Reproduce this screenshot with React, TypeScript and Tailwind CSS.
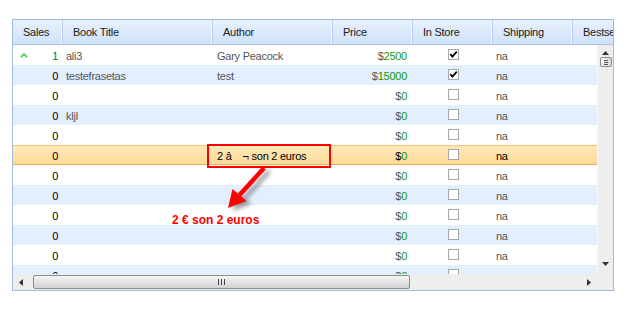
import React from "react";

type Row = {
  sales: number;
  title: string;
  author: React.ReactNode;
  price: number;
  store: boolean;
  ship: string;
  up?: boolean;
  selected?: boolean;
};

const blank = (): Row => ({ sales: 0, title: "", author: "", price: 0, store: false, ship: "na" });

const rows: Row[] = [
  { sales: 1, title: "ali3", author: "Gary Peacock", price: 2500, store: true, ship: "na", up: true },
  { sales: 0, title: "testefrasetas", author: "test", price: 15000, store: true, ship: "na" },
  blank(),
  { ...blank(), title: "kljl" },
  blank(),
  {
    ...blank(),
    selected: true,
    author: (
      <>
        2 â<span className="inline-block w-[11px]" />¬ son 2 euros
      </>
    ),
  },
  blank(),
  blank(),
  blank(),
  blank(),
  blank(),
  blank(),
];

const columns = [
  { label: "Sales", w: "w-[50px]" },
  { label: "Book Title", w: "w-[150px]" },
  { label: "Author", w: "w-[120px]" },
  { label: "Price", w: "w-[80px]" },
  { label: "In Store", w: "w-[80px]" },
  { label: "Shipping", w: "w-[80px]" },
  { label: "Bestseller", w: "w-[80px]" },
];

function Checkbox({ checked }: { checked: boolean }) {
  return (
    <div className="w-[11px] h-[11px] border border-[#a6a6a6] bg-white flex items-center justify-center -mt-[3px]">
      {checked && (
        <svg width="9" height="9" viewBox="0 0 9 9">
          <path d="M1.3 4.2 L3.4 6.6 L7.8 1.6" fill="none" stroke="#000" strokeWidth="1.8" />
        </svg>
      )}
    </div>
  );
}

function GridRow({ row, index }: { row: Row; index: number }) {
  const bg = row.selected
    ? "bg-linear-to-b from-[#fee9bb] to-[#fdd996] shadow-[inset_0_1px_0_#fbc47a,inset_0_-1px_0_#f6ad52]"
    : index % 2 === 1
      ? "bg-[#e3effd]"
      : "bg-white";
  const text = row.selected ? "text-black" : "text-[#555]";
  return (
    <div className={`flex h-[20px] shrink-0 items-center pt-[2px] ${bg} ${text}`}>
      <div className="w-[50px] flex items-center pl-[7px] pr-[5px]">
        {row.up && (
          <svg width="8" height="5" viewBox="0 0 8 5" className="-mt-[1px]">
            <path d="M0.8 4.2 L4 1.2 L7.2 4.2" fill="none" stroke="#45c845" strokeWidth="1.6" />
          </svg>
        )}
        <span className={`ml-auto ${row.sales > 0 ? "text-[#0a7d0a]" : "text-black"}`}>{row.sales}</span>
      </div>
      <div className="w-[150px] pl-[3px] whitespace-nowrap">{row.title}</div>
      <div className="w-[120px] pl-[4px] whitespace-nowrap">{row.author}</div>
      <div className="w-[80px] pr-[6px] text-right">
        $<span className="text-[#119a11]">{row.price}</span>
      </div>
      <div className="w-[80px] flex justify-center">
        <Checkbox checked={row.store} />
      </div>
      <div className="w-[80px] pl-[3px]">{row.ship}</div>
    </div>
  );
}

export default function App() {
  return (
    <div className="relative w-[628px] h-[309px] bg-white pt-[19px] pl-[12px] font-['Liberation_Sans',Arial,sans-serif] text-[11px] tracking-[-0.25px]">
      <div className="w-[602px] h-[272px] border border-[#9fbde2] flex flex-col overflow-hidden">
        {/* header */}
        <div className="flex h-[25px] shrink-0 bg-linear-to-b from-[#e8f1fc] to-[#cfe1f8] border-b border-[#a8c4e6] text-[#222]">
          {columns.map((c) => (
            <div
              key={c.label}
              className={`${c.w} shrink-0 flex items-center pl-[10px] pt-[1px] border-r border-[#b7cfee] shadow-[inset_-1px_0_0_#eef5fd] whitespace-nowrap overflow-hidden`}
            >
              {c.label}
            </div>
          ))}
        </div>

        {/* body */}
        <div className="flex h-[229px] shrink-0">
          <div className="w-[584px] flex flex-col overflow-hidden">
            {rows.map((r, i) => (
              <GridRow key={i} row={r} index={i} />
            ))}
          </div>
          <div className="w-[16px] bg-[#eeeeee] border-l border-[#f7f7f7] flex flex-col items-center pt-[6px]">
            <svg width="7" height="4" viewBox="0 0 7 4">
              <path d="M0 4 L3.5 0 L7 4 Z" fill="#333" />
            </svg>
            <div className="mt-[2px] w-[12px] h-[10px] border border-[#8a8a8a] rounded-[2px] bg-linear-to-r from-[#f4f4f4] to-[#d8d8d8] flex flex-col justify-center gap-[1px] px-[3px]">
              <div className="h-px bg-[#555]" />
              <div className="h-px bg-[#555]" />
              <div className="h-px bg-[#555]" />
            </div>
            <div className="flex-1" />
            <svg width="7" height="4" viewBox="0 0 7 4" className="mb-[8px]">
              <path d="M0 0 L7 0 L3.5 4 Z" fill="#333" />
            </svg>
          </div>
        </div>

        {/* horizontal scrollbar */}
        <div className="flex h-[16px] shrink-0 bg-[#eeeeee] items-center">
          <div className="w-[584px] flex items-center">
            <svg width="4" height="7" viewBox="0 0 4 7" className="ml-[6px]">
              <path d="M4 0 L0 3.5 L4 7 Z" fill="#333" />
            </svg>
            <div className="ml-[10px] w-[377px] h-[14px] border border-[#8d8d8d] rounded-[2px] bg-linear-to-b from-[#f6f6f6] to-[#d2d2d2] flex items-center justify-center gap-[2px]">
              <div className="w-px h-[6px] bg-[#444]" />
              <div className="w-px h-[6px] bg-[#444]" />
              <div className="w-px h-[6px] bg-[#444]" />
            </div>
            <div className="flex-1" />
            <svg width="4" height="7" viewBox="0 0 4 7" className="mr-[6px]">
              <path d="M0 0 L4 3.5 L0 7 Z" fill="#333" />
            </svg>
          </div>
        </div>
      </div>

      {/* annotations */}
      <div className="absolute left-[207px] top-[144px] w-[124px] h-[24px] border-2 border-[#f00]" />
      <svg className="absolute left-0 top-0 pointer-events-none" width="628" height="309">
        <defs>
          <filter id="blur" x="-50%" y="-50%" width="200%" height="200%">
            <feGaussianBlur stdDeviation="2" />
          </filter>
        </defs>
        <g transform="translate(5 3)" filter="url(#blur)" opacity="0.55">
          <line x1="264" y1="168" x2="240" y2="195" stroke="#555" strokeWidth="4.5" />
          <polygon points="228,208 232.5,189 246.5,201" fill="#555" />
        </g>
        <line x1="264" y1="168" x2="239.5" y2="195" stroke="#f00" strokeWidth="4.5" />
        <polygon points="228,208 232.5,189 246.5,201" fill="#f00" />
      </svg>
      <div className="absolute left-[172px] top-[211px] text-[12px] font-bold tracking-normal text-[#f00] whitespace-nowrap">
        2 € son 2 euros
      </div>
    </div>
  );
}
